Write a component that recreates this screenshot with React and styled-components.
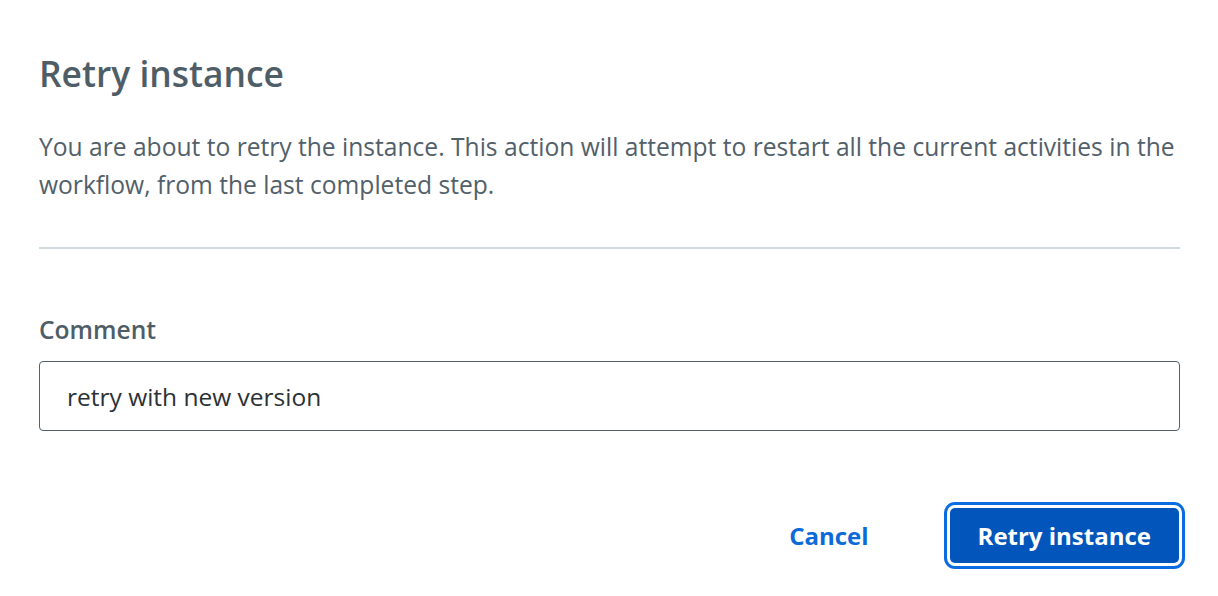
import React from "react";
import styled, { createGlobalStyle } from "styled-components";

const Global = createGlobalStyle`
  html, body { margin: 0; padding: 0; background: #fff; }
  body { font-family: "Open Sans", "Noto Sans", sans-serif; }
  * { box-sizing: border-box; }
`;

const Dialog = styled.div`
  width: 1218px;
  min-height: 596px;
  padding: 50px 38px 0 39px;
  display: flex;
  flex-direction: column;
`;

const Title = styled.h1`
  margin: 0;
  font-size: 35.4px;
  font-weight: 600;
  line-height: 46px;
  color: #4f5d67;
`;

const Body = styled.p`
  margin: 32px 0 0;
  font-size: 24.6px;
  line-height: 38px;
  color: #52606a;
`;

const Divider = styled.hr`
  margin: 43px 0 0;
  border: 0;
  border-top: 2px solid #d0d9dd;
`;

const Field = styled.div`
  margin-top: 66px;
  display: flex;
  flex-direction: column;
  gap: 16px;
`;

const Label = styled.label`
  font-size: 24.6px;
  font-weight: 600;
  line-height: 30px;
  color: #4f5d67;
`;

const Input = styled.input`
  height: 70px;
  width: 100%;
  padding: 0 27px;
  font-family: inherit;
  font-size: 24.5px;
  color: #2b3136;
  border: 1px solid #56636c;
  border-radius: 4px;
  outline: none;
  background: #fff;
`;

const Actions = styled.div`
  margin-top: 77px;
  display: flex;
  justify-content: flex-end;
  align-items: center;
  gap: 81px;
`;

const LinkButton = styled.button`
  background: none;
  border: 0;
  padding: 0;
  font-family: inherit;
  font-size: 24px;
  font-weight: 700;
  color: #0c6bd8;
  cursor: pointer;
`;

const PrimaryButton = styled.button`
  height: 55px;
  padding: 0 28px;
  font-family: inherit;
  font-size: 24px;
  font-weight: 700;
  color: #fff;
  background: #0256bb;
  border: 0;
  border-radius: 5px;
  outline: 3px solid #0a6ce0;
  outline-offset: 3px;
  margin-right: 1px;
  cursor: pointer;
`;

export default function App() {
  return (
    <>
      <Global />
      <Dialog>
        <Title>Retry instance</Title>
        <Body>
          You are about to retry the instance. This action will attempt to restart all the current activities in the
          workflow, from the last completed step.
        </Body>
        <Divider />
        <Field>
          <Label htmlFor="comment">Comment</Label>
          <Input id="comment" defaultValue="retry with new version" />
        </Field>
        <Actions>
          <LinkButton>Cancel</LinkButton>
          <PrimaryButton>Retry instance</PrimaryButton>
        </Actions>
      </Dialog>
    </>
  );
}
